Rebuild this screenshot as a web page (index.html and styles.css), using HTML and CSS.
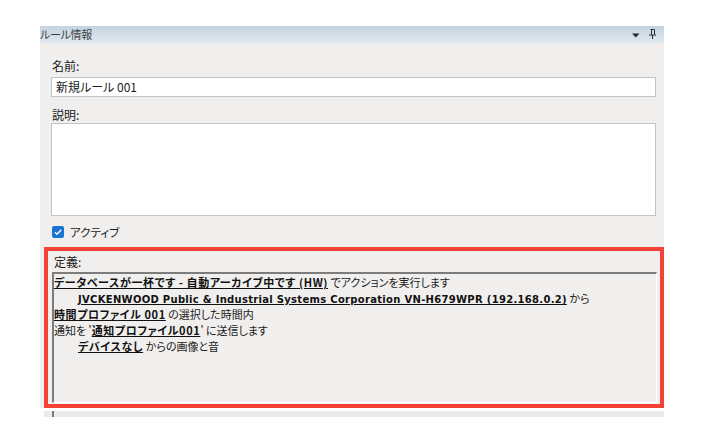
FILE: index.html
```html
<!DOCTYPE html>
<html lang="ja">
<head>
<meta charset="utf-8">
<title>ルール情報</title>
<link rel="stylesheet" href="styles.css">
</head>
<body>
<div class="panel">
  <div class="titlebar">
    <span class="title">ルール情報</span>
    <span class="tools">
      <svg class="ico-drop" width="8" height="5" viewBox="0 0 8 5"><path d="M0 0.5H7.5L3.75 4.5Z" fill="#2b2b2b"/></svg>
      <svg class="ico-pin" width="7" height="10" viewBox="0 0 7 10"><path d="M1.5 0.5H5.5V5.5M2.5 0.5V5.5M0 6H7M3.5 6V10" fill="none" stroke="#2b2b2b" stroke-width="1"/></svg>
    </span>
  </div>
  <div class="body">
    <div class="label">名前:</div>
    <div class="input">新規ルール 001</div>
    <div class="label label-desc">説明:</div>
    <div class="textarea"></div>
    <div class="check-row">
      <span class="checkbox"><svg width="12" height="12" viewBox="0 0 12 12"><path d="M3 6.2L5 8.2L9.2 3.8" fill="none" stroke="#fff" stroke-width="1.4"/></svg></span>
      <span class="check-label">アクティブ</span>
    </div>
    <div class="def">
      <div class="def-label">定義:</div>
      <div class="def-box">
        <div class="line"><span class="bj">データベースが一杯です - 自動アーカイブ中です (HW)</span> でアクションを実行します</div>
        <div class="line indent"><span class="bl">JVCKENWOOD Public &amp; Industrial Systems Corporation VN-H679WPR (192.168.0.2)</span> から</div>
        <div class="line"><span class="bj">時間プロファイル 001</span> の選択した時間内</div>
        <div class="line">通知を '<span class="bj">通知プロファイル001</span>' に送信します</div>
        <div class="line indent"><span class="bj">デバイスなし</span> からの画像と音</div>
      </div>
    </div>
  </div>
  <div class="next"><span class="tick"></span></div>
</div>
</body>
</html>
```
FILE: styles.css
```css
html, body {
  margin: 0;
  padding: 0;
  background: #ffffff;
}
body {
  font-family: "Noto Sans CJK JP", "Noto Sans", sans-serif;
  color: #1b1b1b;
  font-feature-settings: "palt";
}
.panel {
  margin: 26px 0 0 40px;
  width: 624px;
}
.titlebar {
  height: 17px;
  background: linear-gradient(#c3d3e0, #dfe8ef);
  display: flex;
  align-items: center;
  justify-content: space-between;
}
.title {
  font-size: 11px;
  line-height: 17px;
  color: #3a3f45;
  letter-spacing: -0.3px;
}
.tools {
  display: flex;
  align-items: center;
  gap: 9px;
  padding-right: 8px;
}
.ico-drop { margin-top: 2px; }
.ico-pin { margin-top: -1px; }
.body {
  background: #f0efed;
  padding: 15px 0 0 4px;
}
.label {
  font-size: 12px;
  line-height: 16px;
  padding-left: 8px;
  height: 16px;
}
.input {
  margin: 3px 8px 0 7px;
  height: 18px;
  border: 1px solid #c4c4c4;
  background: #fff;
  font-size: 12px;
  line-height: 18px;
  padding-left: 4px;
}
.label-desc {
  margin-top: 10px;
}
.textarea {
  margin: 0 8px 0 7px;
  height: 91px;
  border: 1px solid #c4c4c4;
  background: #fff;
}
.check-row {
  display: flex;
  align-items: center;
  height: 16px;
  margin-top: 8px;
  padding-left: 8px;
}
.checkbox {
  width: 12px;
  height: 12px;
  border-radius: 2px;
  background: #1a74d2;
  display: flex;
}
.check-label {
  font-size: 11.5px;
  margin-left: 6px;
  line-height: 16px;
}
.def {
  margin-top: 7px;
  border: 4px solid #f44336;
  padding: 0 3px 1px 4px;
}
.def-label {
  font-size: 12px;
  line-height: 16px;
  padding: 3px 0 0 2px;
  height: 18px;
}
.def-box {
  height: 128px;
  border-top: 2px solid #7c7c7c;
  border-left: 2px solid #7c7c7c;
  border-right: 1px solid #ffffff;
  border-bottom: 1px solid #ffffff;
  padding: 0;
}
.line {
  font-size: 11px;
  line-height: 16px;
  height: 16px;
  white-space: nowrap;
  color: #1b1b1b;
}
.indent {
  padding-left: 24px;
}
.bj {
  font-weight: bold;
  text-decoration: underline;
  letter-spacing: 0.6px;
  color: #111;
}
.bl {
  font-family: "DejaVu Sans", "Noto Sans CJK JP", sans-serif;
  font-size: 10px;
  font-weight: bold;
  text-decoration: underline;
  letter-spacing: 0.3px;
  color: #111;
}
.next {
  margin: 3px 0 0 4px;
  height: 6px;
  background: #ebebeb;
  display: flex;
}
.tick {
  width: 2px;
  height: 6px;
  margin-left: 8px;
  background: #7a7a7a;
}
```
